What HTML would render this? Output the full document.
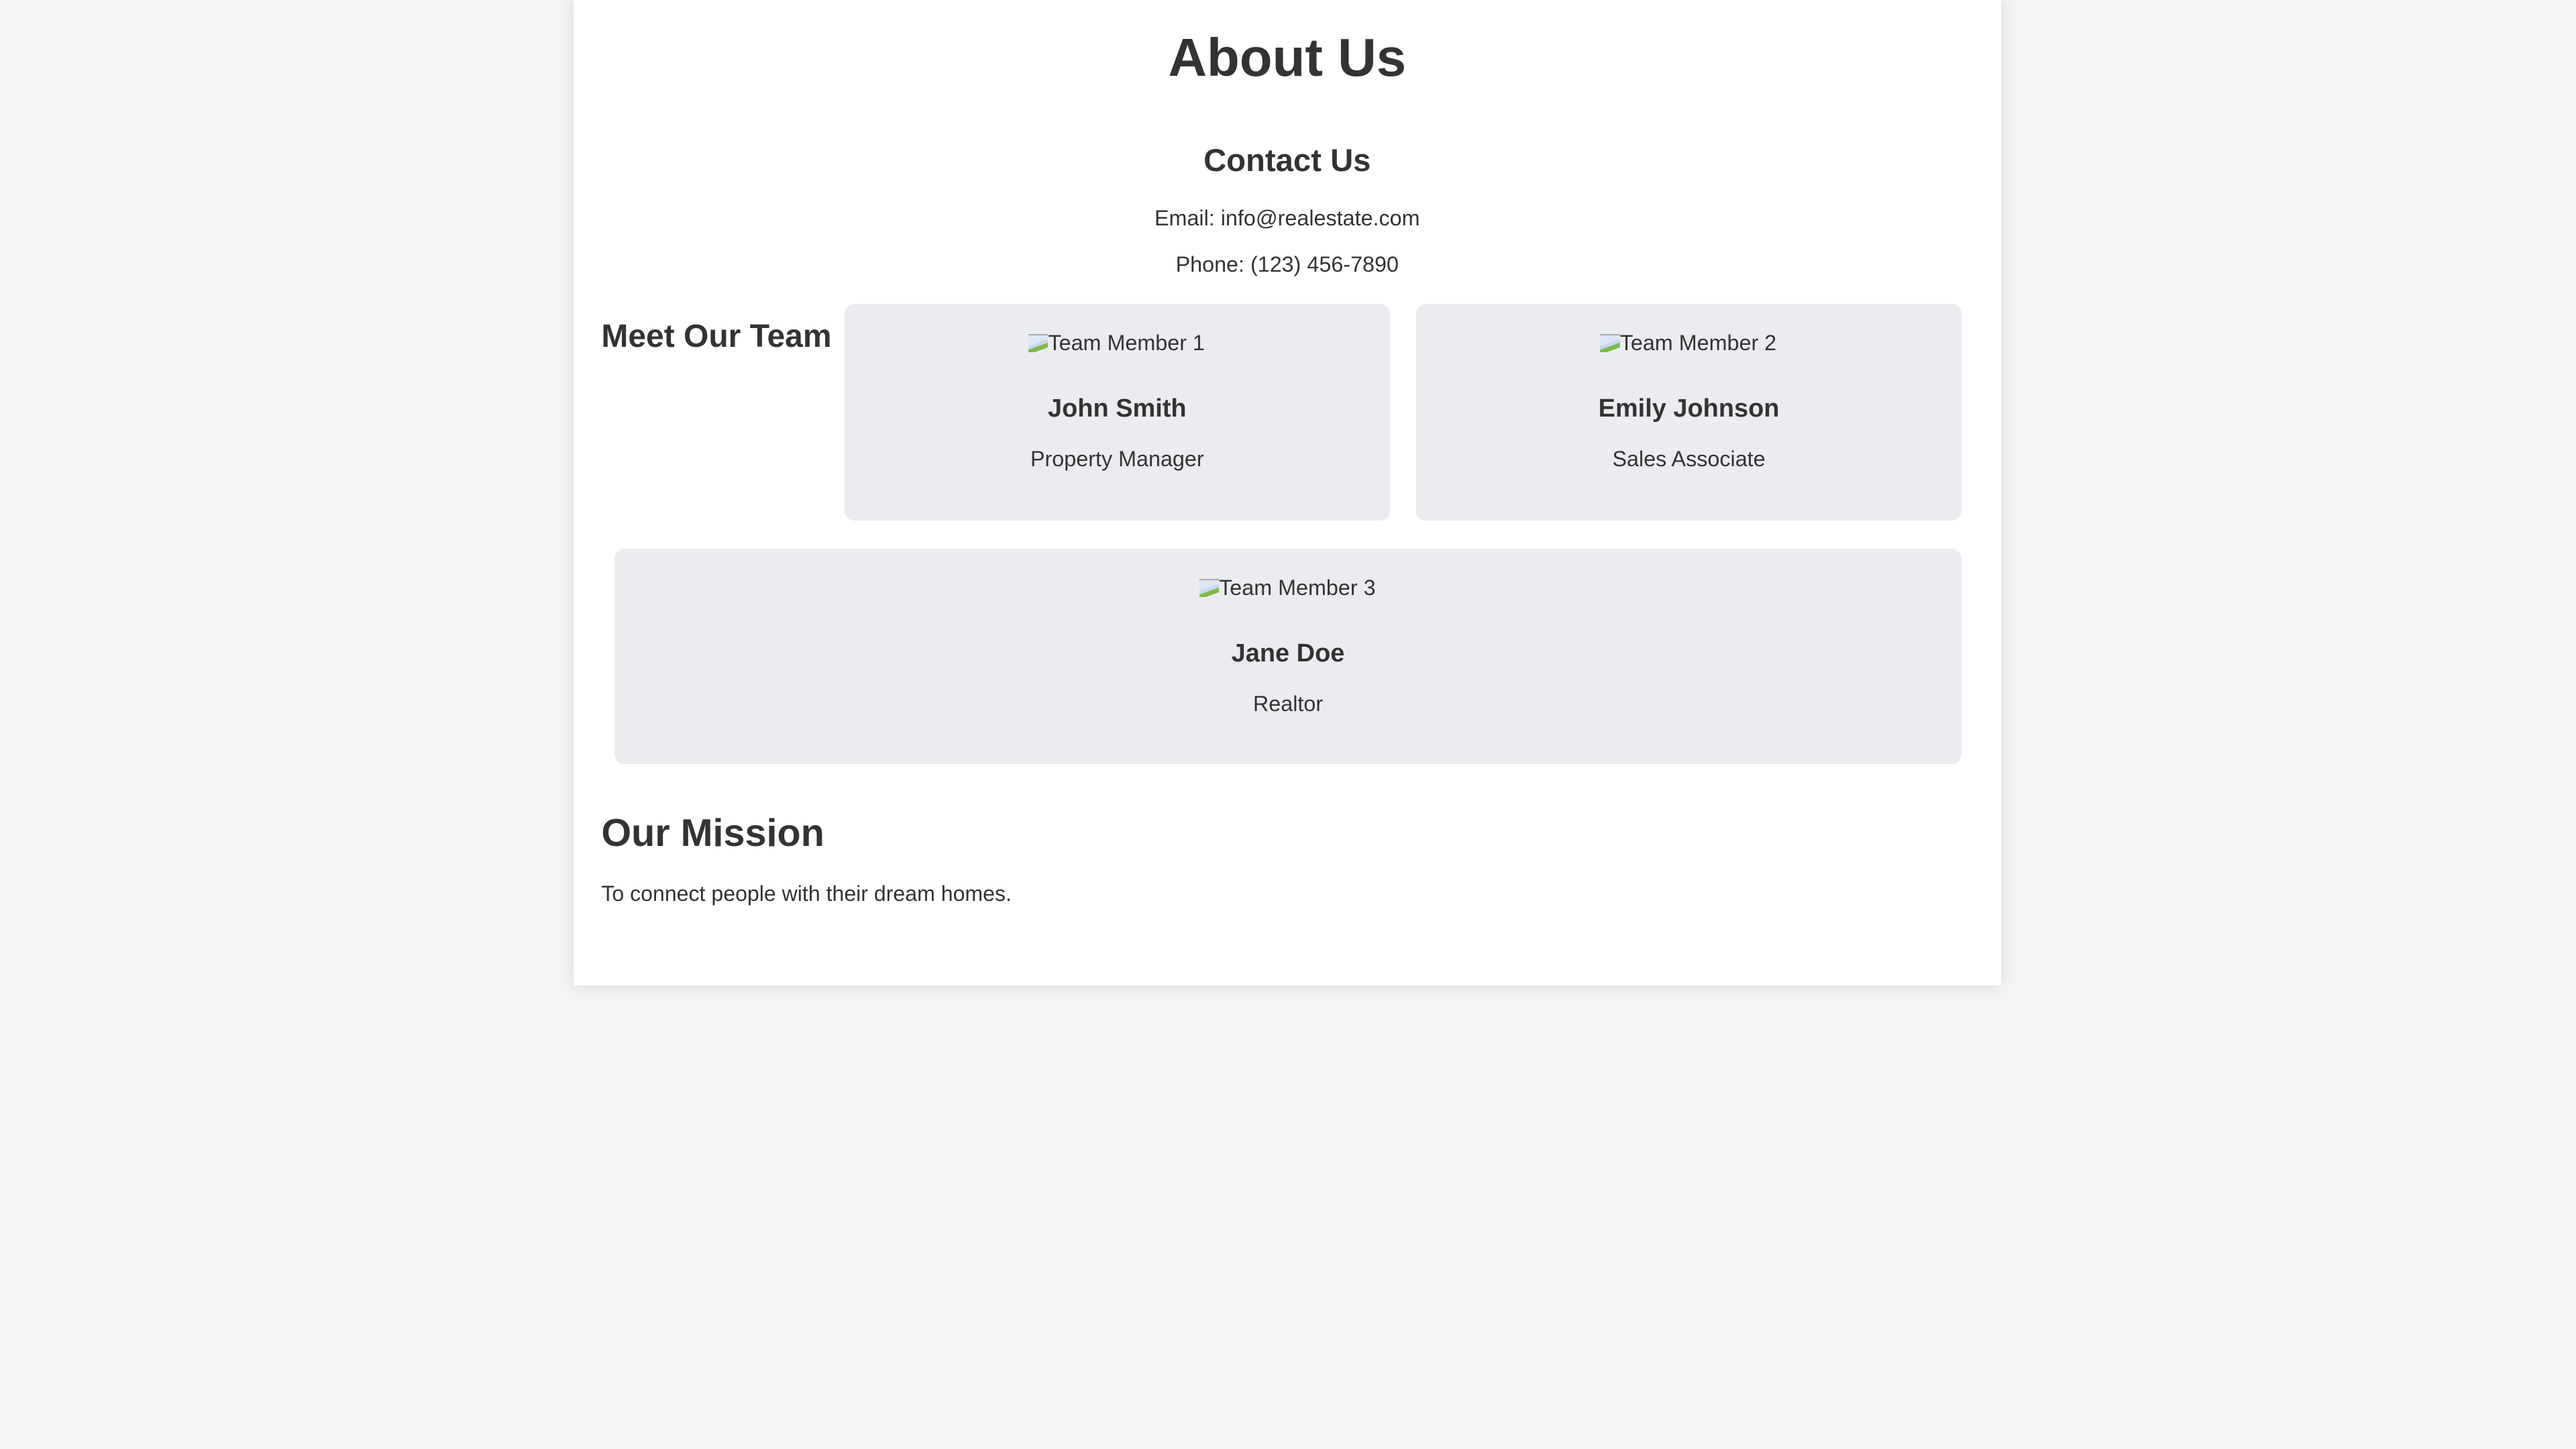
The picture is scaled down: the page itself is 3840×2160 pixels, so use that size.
<!DOCTYPE html>
<html><head><meta charset="utf-8"><style>
html,body{margin:0;padding:0}
body{width:1568px;height:882px;background:#f4f4f4;zoom:2.449;font-family:"Liberation Sans",Arial,sans-serif;color:#333;position:relative;overflow:hidden}
.c{position:absolute;left:349px;top:0;width:869px;height:600px;background:#fff;box-shadow:0 0 8px rgba(0,0,0,.12)}
.a{position:absolute;white-space:nowrap}
.card{position:absolute;background:#ebecf0;border-radius:6px}
.img{position:absolute;top:16px;left:50%;margin-left:-54px;width:108px;height:16px;overflow:hidden;font-size:13.2px;line-height:16px;white-space:nowrap;color:#333}
.img i{display:inline-block;width:12px;height:10px;vertical-align:-1px;background:linear-gradient(160deg,#dce6f5 0 45%,#c8d8ef 45% 60%,#7dbb4a 60% 80%,#ebecf0 80%);border-top:1px solid #aaa}
.nm{position:absolute;left:0;right:0;text-align:center;top:55px;font-size:15.5px;font-weight:bold}
.rl{position:absolute;left:0;right:0;text-align:center;top:87px;font-size:13.2px}
</style></head><body>
<div class="c"></div>
<div class="a" style="top:15px;font-size:32.6px;font-weight:bold;line-height:40px;left:349px;width:869px;text-align:center">About Us</div>
<div class="a" style="top:86px;font-size:19.3px;font-weight:bold;line-height:24px;left:349px;width:869px;text-align:center">Contact Us</div>
<div class="a" style="top:125px;font-size:13.2px;line-height:16px;left:349px;width:869px;text-align:center">Email: info@realestate.com</div>
<div class="a" style="top:153px;font-size:13.2px;line-height:16px;left:349px;width:869px;text-align:center">Phone: (123) 456-7890</div>
<div class="a" style="top:193px;left:366px;font-size:19.6px;font-weight:bold;line-height:24px">Meet Our Team</div>
<div class="card" style="left:514px;top:185px;width:332px;height:132px"><div class="img"><i></i>Team Member 1</div><div class="nm">John Smith</div><div class="rl">Property Manager</div></div>
<div class="card" style="left:862px;top:185px;width:332px;height:132px"><div class="img"><i></i>Team Member 2</div><div class="nm">Emily Johnson</div><div class="rl">Sales Associate</div></div>
<div class="card" style="left:374px;top:334px;width:820px;height:131px"><div class="img"><i></i>Team Member 3</div><div class="nm">Jane Doe</div><div class="rl">Realtor</div></div>
<div class="a" style="top:493px;left:366px;font-size:23.5px;font-weight:bold;line-height:29px">Our Mission</div>
<div class="a" style="top:536px;left:366px;font-size:13.1px;line-height:16px">To connect people with their dream homes.</div>
</body></html>
